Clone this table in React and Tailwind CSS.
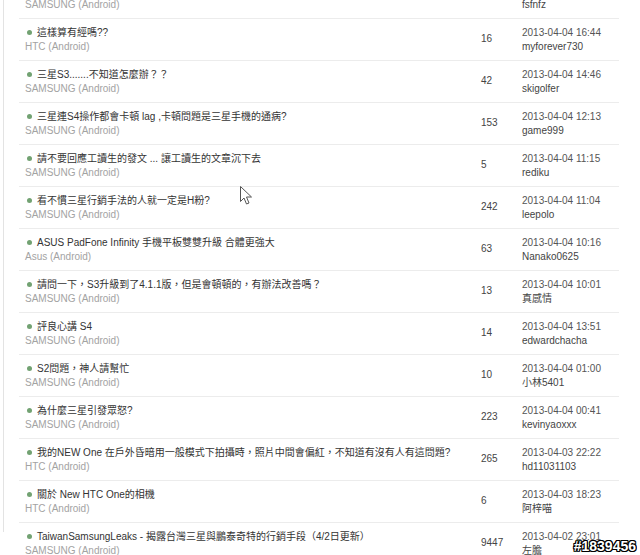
import React from "react";

const rows = [
  { t: "三星Note2 更新後的問題", s: "SAMSUNG (Android)", c: "27", d: "2013-04-04 17:02", u: "fsfnfz" },
  { t: "這樣算有經嗎??", s: "HTC (Android)", c: "16", d: "2013-04-04 16:44", u: "myforever730" },
  { t: "三星S3.......不知道怎麼辦？？", s: "SAMSUNG (Android)", c: "42", d: "2013-04-04 14:46", u: "skigolfer" },
  { t: "三星連S4操作都會卡頓 lag ,卡頓問題是三星手機的通病?", s: "SAMSUNG (Android)", c: "153", d: "2013-04-04 12:13", u: "game999" },
  { t: "請不要回應工讀生的發文 ... 讓工讀生的文章沉下去", s: "SAMSUNG (Android)", c: "5", d: "2013-04-04 11:15", u: "rediku" },
  { t: "看不慣三星行銷手法的人就一定是H粉?", s: "SAMSUNG (Android)", c: "242", d: "2013-04-04 11:04", u: "leepolo" },
  { t: "ASUS PadFone Infinity 手機平板雙雙升級 合體更強大", s: "Asus (Android)", c: "63", d: "2013-04-04 10:16", u: "Nanako0625" },
  { t: "請問一下，S3升級到了4.1.1版，但是會頓頓的，有辦法改善嗎？", s: "SAMSUNG (Android)", c: "13", d: "2013-04-04 10:01", u: "真感情" },
  { t: "評良心講 S4", s: "SAMSUNG (Android)", c: "14", d: "2013-04-04 13:51", u: "edwardchacha" },
  { t: "S2問題，神人請幫忙", s: "SAMSUNG (Android)", c: "10", d: "2013-04-04 01:00", u: "小林5401" },
  { t: "為什麼三星引發眾怒?", s: "SAMSUNG (Android)", c: "223", d: "2013-04-04 00:41", u: "kevinyaoxxx" },
  { t: "我的NEW One 在戶外昏暗用一般模式下拍攝時，照片中間會偏紅，不知道有沒有人有這問題?", s: "HTC (Android)", c: "265", d: "2013-04-03 22:22", u: "hd11031103" },
  { t: "關於 New HTC One的相機", s: "HTC (Android)", c: "6", d: "2013-04-03 18:23", u: "阿梓喵" },
  { t: "TaiwanSamsungLeaks - 揭露台灣三星與鵬泰奇特的行銷手段（4/2日更新）", s: "SAMSUNG (Android)", c: "9447", d: "2013-04-02 23:01", u: "左膽" },
];

export default function App() {
  return (
    <div className="relative h-[555px] w-[640px] overflow-hidden bg-white font-['Liberation_Sans','Noto_Sans_CJK_TC',sans-serif] text-[10px]">
      <div className="ml-[3px] h-full border-l border-[#e3e3e3] pl-[15px]">
        <div className="-mt-[23px] w-[600px]">
          {rows.map((r, i) => (
            <div key={i} className="flex h-[42px] items-center border-b border-[#ececec]">
              <div className="w-[462px] pl-[6px] leading-[14px]">
                <div className="flex items-center whitespace-nowrap text-[#333]">
                  <span className="ml-[2px] mr-[5px] h-[5px] w-[5px] shrink-0 rounded-full bg-[#72a272]" />
                  <span>{r.t}</span>
                </div>
                <div className="text-[#a3a3a3]">{r.s}</div>
              </div>
              <div className="w-[41px] pb-[3px] text-[#444]">{r.c}</div>
              <div className="leading-[14px]">
                <div className="text-[#555]">{r.d}</div>
                <div className="text-[#444]">{r.u}</div>
              </div>
            </div>
          ))}
        </div>
      </div>

      <svg className="absolute left-[240px] top-[186px]" width="13" height="20" viewBox="0 0 13 20">
        <path d="M0.5 0.5 L0.5 15.5 L4 12 L6.5 18 L9 17 L6.5 11 L11.5 11 Z" fill="white" stroke="#555" strokeWidth="1" strokeLinejoin="miter" />
      </svg>

      <div className="absolute bottom-[2px] right-[4px] text-[14px] font-bold leading-[14px] text-white [text-shadow:1px_1px_0_#000,-1px_-1px_0_#000,1px_-1px_0_#000,-1px_1px_0_#000,0_1px_0_#000,0_-1px_0_#000,1px_0_0_#000,-1px_0_0_#000]">
        #1839456
      </div>
    </div>
  );
}
